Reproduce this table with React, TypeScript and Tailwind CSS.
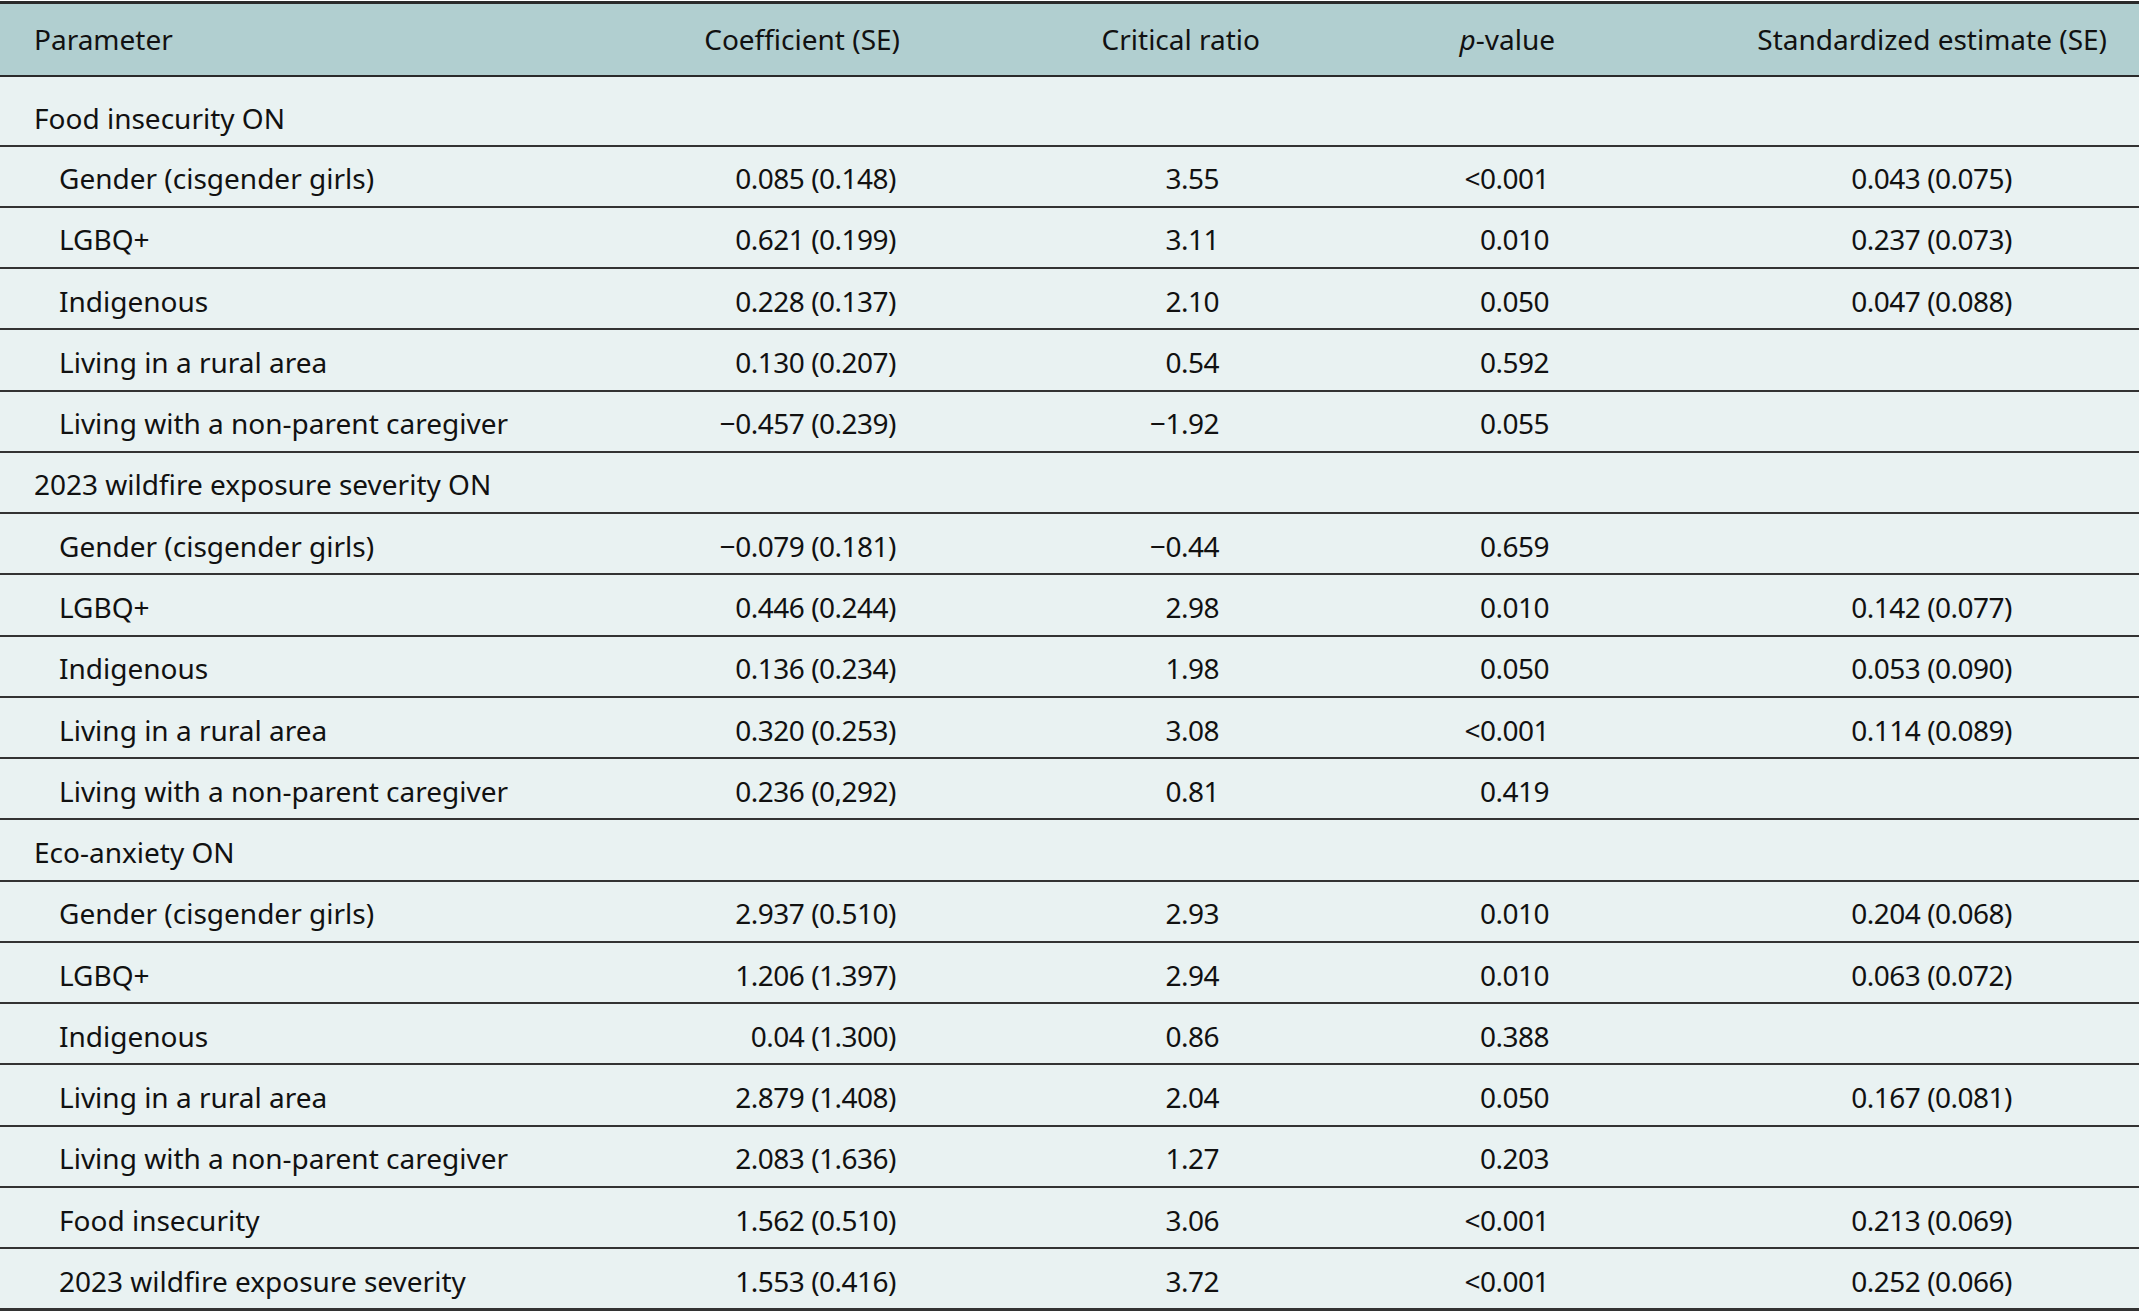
type Row = { label: string; group?: boolean; coef?: string; cr?: string; p?: string; std?: string };

const rows: Row[] = [
  { label: "Food insecurity ON", group: true },
  { label: "Gender (cisgender girls)", coef: "0.085 (0.148)", cr: "3.55", p: "<0.001", std: "0.043 (0.075)" },
  { label: "LGBQ+", coef: "0.621 (0.199)", cr: "3.11", p: "0.010", std: "0.237 (0.073)" },
  { label: "Indigenous", coef: "0.228 (0.137)", cr: "2.10", p: "0.050", std: "0.047 (0.088)" },
  { label: "Living in a rural area", coef: "0.130 (0.207)", cr: "0.54", p: "0.592" },
  { label: "Living with a non-parent caregiver", coef: "\u22120.457 (0.239)", cr: "\u22121.92", p: "0.055" },
  { label: "2023 wildfire exposure severity ON", group: true },
  { label: "Gender (cisgender girls)", coef: "\u22120.079 (0.181)", cr: "\u22120.44", p: "0.659" },
  { label: "LGBQ+", coef: "0.446 (0.244)", cr: "2.98", p: "0.010", std: "0.142 (0.077)" },
  { label: "Indigenous", coef: "0.136 (0.234)", cr: "1.98", p: "0.050", std: "0.053 (0.090)" },
  { label: "Living in a rural area", coef: "0.320 (0.253)", cr: "3.08", p: "<0.001", std: "0.114 (0.089)" },
  { label: "Living with a non-parent caregiver", coef: "0.236 (0,292)", cr: "0.81", p: "0.419" },
  { label: "Eco-anxiety ON", group: true },
  { label: "Gender (cisgender girls)", coef: "2.937 (0.510)", cr: "2.93", p: "0.010", std: "0.204 (0.068)" },
  { label: "LGBQ+", coef: "1.206 (1.397)", cr: "2.94", p: "0.010", std: "0.063 (0.072)" },
  { label: "Indigenous", coef: "0.04 (1.300)", cr: "0.86", p: "0.388" },
  { label: "Living in a rural area", coef: "2.879 (1.408)", cr: "2.04", p: "0.050", std: "0.167 (0.081)" },
  { label: "Living with a non-parent caregiver", coef: "2.083 (1.636)", cr: "1.27", p: "0.203" },
  { label: "Food insecurity", coef: "1.562 (0.510)", cr: "3.06", p: "<0.001", std: "0.213 (0.069)" },
  { label: "2023 wildfire exposure severity", coef: "1.553 (0.416)", cr: "3.72", p: "<0.001", std: "0.252 (0.066)" },
];

export default function App() {
  return (
    <div className="w-[2142px] h-[1314px] bg-white pt-[1px] font-['Noto_Sans',sans-serif] text-[28px] text-[#111]">
      <table className="w-[2139px] table-fixed border-collapse bg-[#e9f2f2]">
        <colgroup>
          <col className="w-[640px]" />
          <col className="w-[360px]" />
          <col className="w-[330px]" />
          <col className="w-[310px]" />
          <col />
        </colgroup>
        <thead>
          <tr className="h-[73px] bg-[#b1cfd0] border-t-[3px] border-b-[2px] border-[#2a2a2a]">
            <th className="pl-[34px] text-left font-normal">Parameter</th>
            <th className="pr-[100px] text-right font-normal">Coefficient (SE)</th>
            <th className="pr-[70px] text-right font-normal">Critical ratio</th>
            <th className="pr-[85px] text-right font-normal">
              <i>p</i>-value
            </th>
            <th className="pr-[32px] text-right font-normal">Standardized estimate (SE)</th>
          </tr>
        </thead>
        <tbody>
          {rows.map((r, idx) => (
            <tr
              key={idx}
              className={`${idx === 0 ? "h-[70px]" : "h-[61.27px]"} ${
                idx === rows.length - 1 ? "border-b-[3px]" : "border-b-[2px]"
              } border-[#333]`}
            >
              <td className={`${r.group ? "pl-[34px]" : "pl-[59px]"} ${idx === 0 ? "pt-[15px]" : "pt-[4px]"}`}>
                {r.label}
              </td>
              <td className={`pr-[104px] text-right tracking-[-0.5px] ${idx === 0 ? "pt-[15px]" : "pt-[4px]"}`}>{r.coef}</td>
              <td className="pr-[111px] pt-[4px] text-right tracking-[-0.5px]">{r.cr}</td>
              <td className="pr-[91px] pt-[4px] text-right tracking-[-0.5px]">{r.p}</td>
              <td className="pr-[127px] pt-[4px] text-right tracking-[-0.5px]">{r.std}</td>
            </tr>
          ))}
        </tbody>
      </table>
    </div>
  );
}
